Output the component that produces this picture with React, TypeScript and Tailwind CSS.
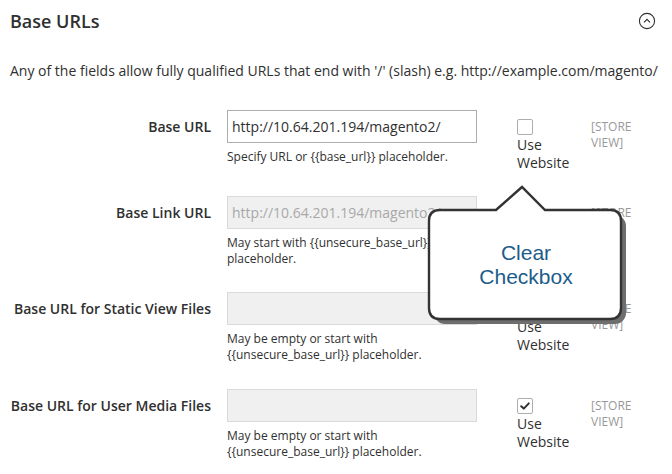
import React from "react";

type Row = {
  label: string;
  value?: string;
  disabled?: boolean;
  note: React.ReactNode;
  checked: boolean;
  height: string;
};

const rows: Row[] = [
  {
    label: "Base URL",
    value: "http://10.64.201.194/magento2/",
    note: "Specify URL or {{base_url}} placeholder.",
    checked: false,
    height: "h-[86px]",
  },
  {
    label: "Base Link URL",
    value: "http://10.64.201.194/magento2/",
    disabled: true,
    note: (
      <>
        May start with {"{{unsecure_base_url}}"}
        <br />
        placeholder.
      </>
    ),
    checked: true,
    height: "h-[96px]",
  },
  {
    label: "Base URL for Static View Files",
    value: "",
    disabled: true,
    note: (
      <>
        May be empty or start with
        <br />
        {"{{unsecure_base_url}}"} placeholder.
      </>
    ),
    checked: true,
    height: "h-[97px]",
  },
  {
    label: "Base URL for User Media Files",
    value: "",
    disabled: true,
    note: (
      <>
        May be empty or start with
        <br />
        {"{{unsecure_base_url}}"} placeholder.
      </>
    ),
    checked: true,
    height: "h-[85px]",
  },
];

function Checkbox({ checked }: { checked: boolean }) {
  return (
    <div className="w-[16px] h-[16px] border border-[#adadad] rounded-[2px] bg-white flex items-center justify-center">
      {checked && (
        <svg width="12" height="12" viewBox="0 0 12 12">
          <path d="M2.2 6.2 L4.8 8.6 L9.8 3.4" fill="none" stroke="#303030" strokeWidth="2" strokeLinecap="round" strokeLinejoin="round" />
        </svg>
      )}
    </div>
  );
}

export default function App() {
  return (
    <div className="relative w-[672px] h-[474px] bg-white overflow-hidden text-[#303030]" style={{ fontFamily: '"Open Sans", "Liberation Sans", sans-serif' }}>
      <div className="pt-[9px] px-[10px]">
        <div className="flex items-center justify-between h-[24px]">
          <h2 className="text-[18px] leading-[24px] font-semibold text-[#303030]">Base URLs</h2>
          <svg width="18" height="18" viewBox="0 0 18 18" className="mr-[6px] mt-[-1px]">
            <circle cx="9" cy="9" r="7.6" fill="none" stroke="#303030" strokeWidth="1.1" />
            <path d="M6 10.4 L9 7.4 L12 10.4" fill="none" stroke="#303030" strokeWidth="1.1" />
          </svg>
        </div>
        <p className="mt-[28px] text-[14px] leading-[20px] whitespace-nowrap">
          Any of the fields allow fully qualified URLs that end with '/' (slash) e.g. http://example.com/magento/
        </p>
        <div className="mt-[29px]">
          {rows.map((r) => (
            <div key={r.label} className={`flex ${r.height}`}>
              <div className="w-[201px] text-right pt-[7px] text-[14px] leading-[19px] font-semibold whitespace-nowrap">
                {r.label}
              </div>
              <div className="ml-[16px] w-[250px]">
                <div
                  className={`h-[33px] border px-[4px] text-[14px] leading-[31px] whitespace-nowrap overflow-hidden ${
                    r.disabled ? "bg-[#f0f0f0] border-[#dadada] text-[#a8a8a8]" : "bg-white border-[#adadad] text-[#303030]"
                  }`}
                >
                  {r.value}
                </div>
                <div className="mt-[6px] text-[12px] leading-[16px] text-[#303030]">{r.note}</div>
              </div>
              <div className="ml-[40px] w-[74px] pt-[9px]">
                <Checkbox checked={r.checked} />
                <div className="text-[14px] leading-[18px] mt-[1px]">
                  Use
                  <br />
                  Website
                </div>
              </div>
              <div className="w-[50px] pt-[9px] text-[12px] leading-[16px] text-[#999999] uppercase">
                [Store View]
              </div>
            </div>
          ))}
        </div>
      </div>

      {/* Callout overlay */}
      <svg className="absolute left-0 top-0" width="672" height="474" viewBox="0 0 672 474">
        <rect x="434" y="215" width="192" height="109" rx="11" fill="#6e6e6e" />
        <path
          d="M440 210 L496 210 L522 187 L545 210 L610 210 Q621 210 621 221 L621 308 Q621 319 610 319 L440 319 Q429 319 429 308 L429 221 Q429 210 440 210 Z"
          fill="#ffffff"
          stroke="#333333"
          strokeWidth="2.4"
          strokeLinejoin="miter"
        />
      </svg>
      <div
        className="absolute left-[429px] top-[241px] w-[194px] text-center text-[21px] leading-[24px] text-[#1d5c8a]"
        style={{ fontFamily: '"Liberation Sans", Arial, sans-serif' }}
      >
        Clear
        <br />
        Checkbox
      </div>
    </div>
  );
}
